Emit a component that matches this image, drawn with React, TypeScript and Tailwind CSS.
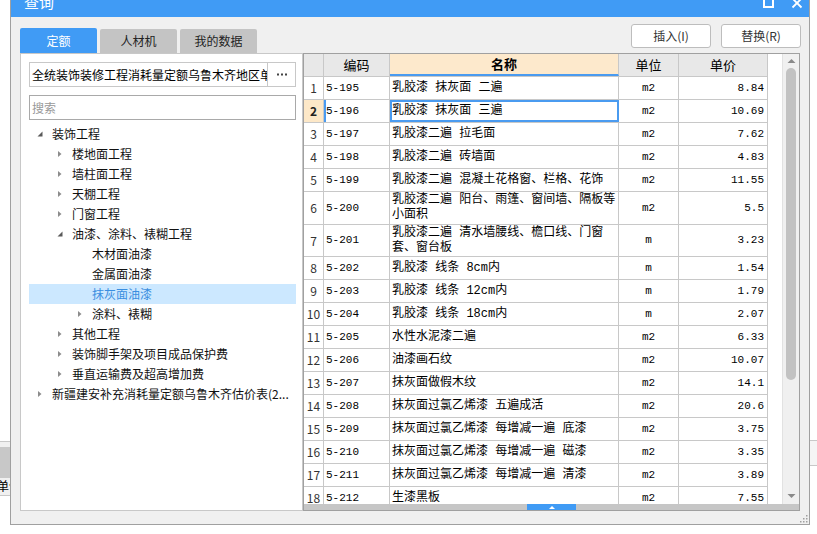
import React from "react";

type Row = { code: string; name: string[]; unit: string; price: string };

const rows: Row[] = [
  { code: "5-195", name: ["乳胶漆 抹灰面 二遍"], unit: "m2", price: "8.84" },
  { code: "5-196", name: ["乳胶漆 抹灰面 三遍"], unit: "m2", price: "10.69" },
  { code: "5-197", name: ["乳胶漆二遍 拉毛面"], unit: "m2", price: "7.62" },
  { code: "5-198", name: ["乳胶漆二遍 砖墙面"], unit: "m2", price: "4.83" },
  { code: "5-199", name: ["乳胶漆二遍 混凝土花格窗、栏格、花饰"], unit: "m2", price: "11.55" },
  { code: "5-200", name: ["乳胶漆二遍 阳台、雨篷、窗间墙、隔板等", "小面积"], unit: "m2", price: "5.5" },
  { code: "5-201", name: ["乳胶漆二遍 清水墙腰线、檐口线、门窗", "套、窗台板"], unit: "m", price: "3.23" },
  { code: "5-202", name: ["乳胶漆 线条 8cm内"], unit: "m", price: "1.54" },
  { code: "5-203", name: ["乳胶漆 线条 12cm内"], unit: "m", price: "1.79" },
  { code: "5-204", name: ["乳胶漆 线条 18cm内"], unit: "m", price: "2.07" },
  { code: "5-205", name: ["水性水泥漆二遍"], unit: "m2", price: "6.33" },
  { code: "5-206", name: ["油漆画石纹"], unit: "m2", price: "10.07" },
  { code: "5-207", name: ["抹灰面做假木纹"], unit: "m2", price: "14.1" },
  { code: "5-208", name: ["抹灰面过氯乙烯漆 五遍成活"], unit: "m2", price: "20.6" },
  { code: "5-209", name: ["抹灰面过氯乙烯漆 每增减一遍 底漆"], unit: "m2", price: "3.75" },
  { code: "5-210", name: ["抹灰面过氯乙烯漆 每增减一遍 磁漆"], unit: "m2", price: "3.35" },
  { code: "5-211", name: ["抹灰面过氯乙烯漆 每增减一遍 清漆"], unit: "m2", price: "3.89" },
  { code: "5-212", name: ["生漆黑板"], unit: "m2", price: "7.55" },
];

type Node = { label: string; level: number; arrow: "open" | "closed" | "none"; selected?: boolean };

const tree: Node[] = [
  { label: "装饰工程", level: 0, arrow: "open" },
  { label: "楼地面工程", level: 1, arrow: "closed" },
  { label: "墙柱面工程", level: 1, arrow: "closed" },
  { label: "天棚工程", level: 1, arrow: "closed" },
  { label: "门窗工程", level: 1, arrow: "closed" },
  { label: "油漆、涂料、裱糊工程", level: 1, arrow: "open" },
  { label: "木材面油漆", level: 2, arrow: "none" },
  { label: "金属面油漆", level: 2, arrow: "none" },
  { label: "抹灰面油漆", level: 2, arrow: "none", selected: true },
  { label: "涂料、裱糊", level: 2, arrow: "closed" },
  { label: "其他工程", level: 1, arrow: "closed" },
  { label: "装饰脚手架及项目成品保护费", level: 1, arrow: "closed" },
  { label: "垂直运输费及超高增加费", level: 1, arrow: "closed" },
  { label: "新疆建安补充消耗量定额乌鲁木齐估价表(2...", level: 0, arrow: "closed" },
];

const indent = ["pl-[7px]", "pl-[27px]", "pl-[47px]"];

const Arrow = ({ kind }: { kind: Node["arrow"] }) => {
  if (kind === "none") return <span className="w-[16px]" />;
  return (
    <span className="w-[16px] flex items-center">
      {kind === "open" ? (
        <svg width="8" height="8" viewBox="0 0 8 8">
          <path d="M6.5 1.5 L6.5 6.5 L1.5 6.5 Z" fill="#5a5a5a" />
        </svg>
      ) : (
        <svg width="8" height="8" viewBox="0 0 8 8">
          <path d="M2 1 L5.5 4 L2 7 Z" fill="#8c8c8c" />
        </svg>
      )}
    </span>
  );
};

const cols = "grid grid-cols-[20px_66px_229px_60px_89px] w-[464px]";
const mono = "font-['Liberation_Mono','Noto_Sans_CJK_SC',monospace]";

export default function App() {
  return (
    <div className="relative w-[817px] h-[534px] overflow-hidden bg-white font-['Noto_Sans_CJK_SC',sans-serif] text-[12px] text-black">
      {/* background window peeking out */}
      <div className="absolute left-0 top-[441px] w-[10px] h-[55px] border-t border-b border-[#c8c8c8] bg-[#f0f0f0] overflow-hidden">
        <div className="h-[31px] mt-[5px] bg-[#c8c8c8]" />
        <div className="text-[12px] leading-[16px] whitespace-nowrap -ml-[3px]">单位</div>
      </div>
      <div className="absolute left-[810px] top-[440px] w-[7px] h-[26px] border-t border-b border-[#c8c8c8] bg-[#f5f5f5]" />

      {/* dialog */}
      <div className="absolute left-[10px] top-[-10px] w-[800px] h-[535px] border border-[#a0a0a0] bg-[#f0f0f0] flex flex-col">
        <div className="h-[26px] bg-[#409bf5] flex items-center justify-between text-white shrink-0">
          <span className="pl-[13px] text-[15px] leading-[15px] -mt-[6px]">查询</span>
          <div className="flex items-center gap-[17px] pr-[6px] -mt-[3px]">
            <span className="w-[11px] h-[10px] border-2 border-white" />
            <svg width="12" height="12" viewBox="0 0 12 12">
              <path d="M1.5 1.5 L10.5 10.5 M10.5 1.5 L1.5 10.5" stroke="#fff" strokeWidth="1.8" />
            </svg>
          </div>
        </div>

        <div className="flex-1 pl-[9px] pr-[8px] pb-[13px] flex flex-col relative">
          <div className="h-[36px] flex justify-between items-start shrink-0">
            <div className="flex gap-[3px] items-end mt-[11px] h-[25px]">
              <div className="w-[77px] h-[25px] bg-[#409bf5] rounded-t-[2px] text-white flex items-center justify-center">定额</div>
              <div className="w-[77px] h-[24px] bg-[#c4c4c4] rounded-t-[2px] text-[#222] flex items-center justify-center">人材机</div>
              <div className="w-[77px] h-[24px] bg-[#c4c4c4] rounded-t-[2px] text-[#222] flex items-center justify-center">我的数据</div>
            </div>
            <div className="flex gap-[10px] mt-[7px]">
              <button className="w-[80px] h-[24px] bg-white border border-[#bdbdbd] rounded-[3px] text-[#333] text-[12px]">插入(I)</button>
              <button className="w-[80px] h-[24px] bg-white border border-[#bdbdbd] rounded-[3px] text-[#333] text-[12px]">替换(R)</button>
            </div>
          </div>

          <div className="flex h-[458px]">
            {/* left tree panel */}
            <div className="w-[283px] border border-[#c8c8c8] bg-white pt-[8px] pl-[8px] pr-[6px] flex flex-col">
              <div className="flex h-[25px]">
                <div className="flex-1 min-w-0 border border-[#c8c8c8] overflow-hidden whitespace-nowrap px-[2px] leading-[23px]">
                  全统装饰装修工程消耗量定额乌鲁木齐地区单位估价表
                </div>
                <div className="w-[28px] shrink-0 border border-l-0 border-[#c8c8c8] flex items-center justify-center">
                  <svg width="12" height="3" viewBox="0 0 12 3">
                    <rect x="1" y="0.5" width="2" height="2" fill="#444" />
                    <rect x="5" y="0.5" width="2" height="2" fill="#444" />
                    <rect x="9" y="0.5" width="2" height="2" fill="#444" />
                  </svg>
                </div>
              </div>
              <div className="mt-[8px] h-[25px] border border-[#a9a9a9] px-[2px] leading-[23px] text-[#999]">搜索</div>
              <div className="mt-[4px] flex flex-col">
                {tree.map((n, i) => (
                  <div
                    key={i}
                    className={`h-[20px] flex items-center whitespace-nowrap ${indent[n.level]} ${
                      n.selected ? "bg-[#cce8ff] text-[#3a8ee0]" : "text-[#111]"
                    }`}
                  >
                    <Arrow kind={n.arrow} />
                    <span>{n.label}</span>
                  </div>
                ))}
              </div>
            </div>

            {/* right grid */}
            <div className="w-[497px] border border-[#a0a0a0] bg-white flex flex-col">
              <div className="flex-1 flex overflow-hidden">
                <div className="flex-1 overflow-hidden">
                  <div className={`${cols} h-[23px] border-b border-[#c8c8c8] text-[13px]`}>
                    <div className="bg-[#e8e8e8] border-r border-[#c8c8c8]" />
                    <div className="bg-[#e8e8e8] border-r border-[#c8c8c8] flex items-center justify-center">编码</div>
                    <div className="bg-[#fde9cc] border-r border-[#c8c8c8] border-b-2 border-b-[#4a9bf0] flex items-center justify-center font-bold">名称</div>
                    <div className="bg-[#e8e8e8] border-r border-[#c8c8c8] flex items-center justify-center">单位</div>
                    <div className="bg-[#e8e8e8] border-r border-[#c8c8c8] flex items-center justify-center">单价</div>
                  </div>
                  {rows.map((r, i) => {
                    const h = i === 5 ? "h-[33px]" : i === 6 ? "h-[32px]" : "h-[23px]";
                    const sel = i === 1;
                    return (
                      <div key={r.code} className={`${cols} ${h} border-b border-[#c8c8c8]`}>
                        <div
                          className={`border-r border-[#c8c8c8] flex items-center justify-center text-[12px] ${
                            sel ? "bg-[#fde8c8] font-bold text-[#222]" : "text-[#333]"
                          }`}
                        >
                          {i + 1}
                        </div>
                        <div
                          className={`border-r border-[#c8c8c8] flex items-center text-[11px] ${mono} ${
                            sel ? "border-l-2 border-l-[#4a9bf0] pl-0" : "pl-[2px]"
                          }`}
                        >
                          {r.code}
                        </div>
                        <div
                          className={`flex flex-col justify-center whitespace-nowrap leading-[15px] ${mono} ${
                            sel ? "border-2 border-[#4a9bf0] pl-0" : "border-r border-[#c8c8c8] pl-[2px]"
                          }`}
                        >
                          {r.name.map((l, k) => (
                            <span key={k}>{l}</span>
                          ))}
                        </div>
                        <div className={`border-r border-[#c8c8c8] flex items-center justify-center text-[11px] ${mono}`}>{r.unit}</div>
                        <div className={`border-r border-[#c8c8c8] flex items-center justify-end pr-[3px] text-[11px] ${mono}`}>{r.price}</div>
                      </div>
                    );
                  })}
                </div>
                <div className="w-[17px] bg-[#f0f0f0] border-l border-[#e2e2e2] flex flex-col items-center">
                  <svg className="mt-[4px]" width="9" height="6" viewBox="0 0 9 6">
                    <path d="M0.5 5 L4.5 1 L8.5 5 Z" fill="#8a8a8a" />
                  </svg>
                  <div className="mt-[4px] w-[10px] h-[312px] rounded-[5px] bg-[#c2c2c2]" />
                  <div className="flex-1" />
                  <svg className="mb-[5px]" width="9" height="6" viewBox="0 0 9 6">
                    <path d="M0.5 1 L4.5 5 L8.5 1 Z" fill="#8a8a8a" />
                  </svg>
                </div>
              </div>
              <div className="h-[6px] bg-[#c6c6c6] flex justify-center shrink-0">
                <div className="w-[49px] h-[6px] bg-[#409bf5] flex items-center justify-center">
                  <svg width="6" height="3" viewBox="0 0 6 3">
                    <path d="M0 3 L3 0 L6 3 Z" fill="#fff" />
                  </svg>
                </div>
              </div>
            </div>
          </div>

          {/* resize grip */}
          <svg className="absolute right-[1px] bottom-[1px]" width="8" height="8" viewBox="0 0 8 8">
            <rect x="6" y="0" width="1.5" height="1.5" fill="#a0a0a0" />
            <rect x="3" y="3" width="1.5" height="1.5" fill="#a0a0a0" />
            <rect x="6" y="3" width="1.5" height="1.5" fill="#a0a0a0" />
            <rect x="0" y="6" width="1.5" height="1.5" fill="#a0a0a0" />
            <rect x="3" y="6" width="1.5" height="1.5" fill="#a0a0a0" />
            <rect x="6" y="6" width="1.5" height="1.5" fill="#a0a0a0" />
          </svg>
        </div>
      </div>
    </div>
  );
}
